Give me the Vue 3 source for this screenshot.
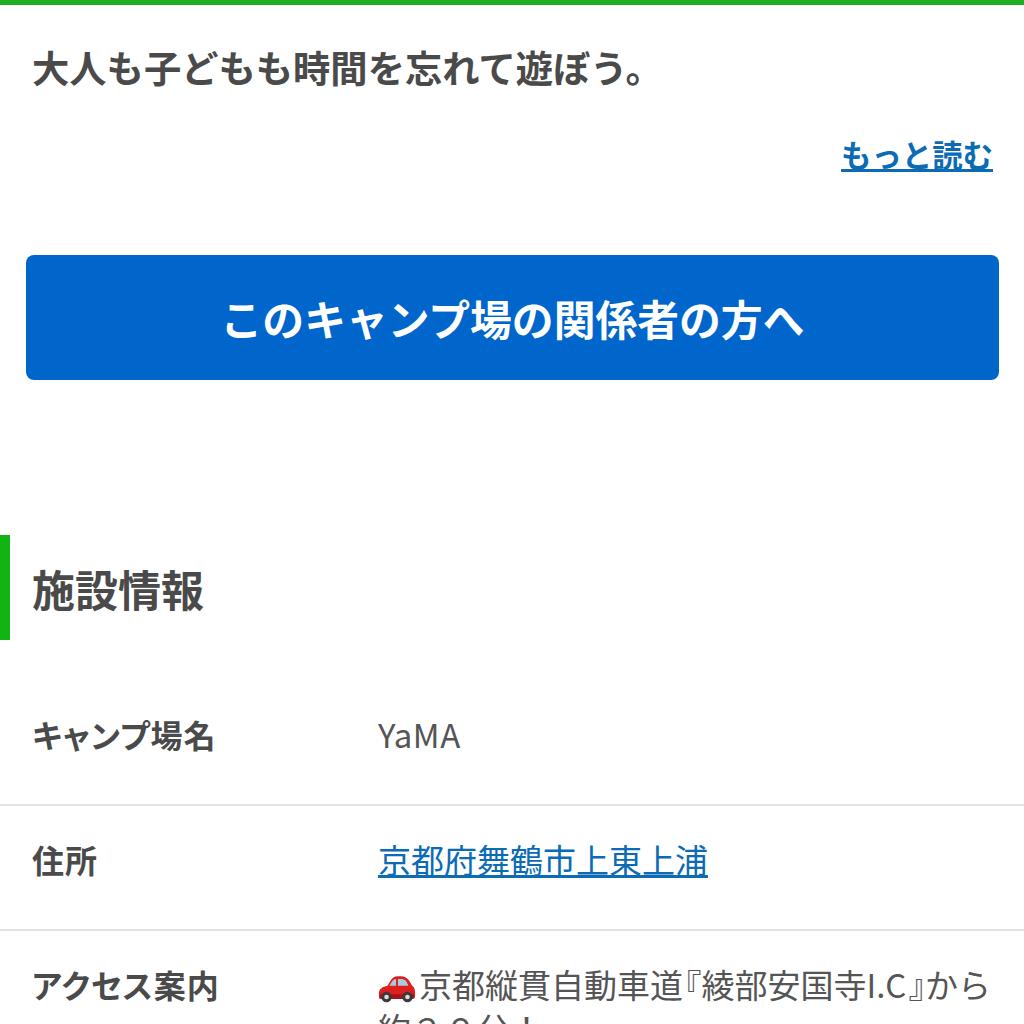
<script setup>
const rows = [
  { label: 'キャンプ場名', value: 'YaMA', spaced: true },
  { label: '住所', value: '京都府舞鶴市上東上浦', link: true },
  { label: 'アクセス案内', car: true }
]
</script>

<template>
  <div class="page">
    <div class="top-line"></div>
    <p class="lead">大人も子どもも時間を忘れて遊ぼう。</p>
    <div class="more-row"><a class="more">もっと読む</a></div>
    <a class="owner-btn">このキャンプ場の関係者の方へ</a>
    <h2 class="section-title">施設情報</h2>
    <div class="table">
      <div v-for="row in rows" :key="row.label" class="row">
        <div class="label">{{ row.label }}</div>
        <div class="value">
          <template v-if="row.car">
            <svg class="car" viewBox="0 0 40 30">
              <path d="M1 20c0-5 4-7 9-8l3-5c2-3 4-5 8-5h3c4 0 7 2 9 5l3 5c2 1 3 4 3 7v4c0 2-1 3-3 3H3c-2 0-2-2-2-4z" fill="#dc1f1f" />
              <path d="M12 12l3-5c1-1 3-2 4-2v7zM21 5h3c3 0 5 1 6 3l2 4H21z" fill="#a9cbdd" />
              <path d="M2 21h36v3c0 1-1 2-2 2H4c-1 0-2-1-2-2z" fill="#a81414" />
              <circle cx="9" cy="24" r="5.5" fill="#3a3a3a" />
              <circle cx="9" cy="24" r="2.4" fill="#ddd" />
              <circle cx="31" cy="24" r="5.5" fill="#3a3a3a" />
              <circle cx="31" cy="24" r="2.4" fill="#ddd" />
            </svg>京都縦貫自動車道<span class="bracket">『</span>綾部安国寺I.C<span class="bracket">』</span>から約２０分！
          </template>
          <a v-else-if="row.link" class="addr">{{ row.value }}</a>
          <span v-else :class="{ spaced: row.spaced }">{{ row.value }}</span>
        </div>
      </div>
    </div>
  </div>
</template>

<style scoped>
.page {
  height: 1024px;
  overflow: hidden;
  background: #fff;
  color: #4a4a4a;
  font-family: "Noto Sans CJK JP", "Noto Sans", sans-serif;
}

.top-line {
  height: 5px;
  background: #1fae1f;
}

.lead {
  margin: 0;
  padding: 34px 32px 0;
  font-size: 37.3px;
  line-height: 56px;
  font-weight: 700;
}

.more-row {
  display: flex;
  justify-content: flex-end;
  padding: 37px 31px 0;
}

.more {
  font-size: 30.4px;
  line-height: 44px;
  font-weight: 700;
  color: #0b6bb5;
  text-decoration: underline;
}

.owner-btn {
  display: flex;
  align-items: center;
  justify-content: center;
  height: 125px;
  margin: 79px 25px 0 26px;
  border-radius: 8px;
  background: #0066cc;
  color: #fff;
  font-size: 41.8px;
  font-weight: 700;
}

.section-title {
  margin: 155px 0 0;
  height: 105px;
  display: flex;
  align-items: center;
  padding-left: 22px;
  border-left: 10px solid #11b511;
  font-size: 43px;
  font-weight: 700;
}

.table {
  margin-top: 41px;
}

.row {
  display: grid;
  grid-template-columns: 346px 1fr;
  padding: 28px 32px 45px;
  border-bottom: 2px solid #e3e3e3;
  line-height: 50px;
}

.row:last-child {
  border-bottom: none;
}

.label {
  font-size: 32px;
  font-weight: 700;
  font-feature-settings: "palt";
  letter-spacing: 1px;
}

.value {
  padding-top: 3px;
  font-size: 33px;
  line-height: 44px;
  color: #555;
}

.addr {
  color: #0b6bb5;
  text-decoration: underline;
}

.bracket {
  font-feature-settings: "halt";
  padding-left: 2px;
}

.spaced {
  letter-spacing: 0.6px;
}

.car {
  width: 38px;
  height: 29px;
  margin-right: 3px;
  vertical-align: -5px;
}
</style>

<style>
html, body {
  margin: 0;
  overflow: hidden;
}
</style>
